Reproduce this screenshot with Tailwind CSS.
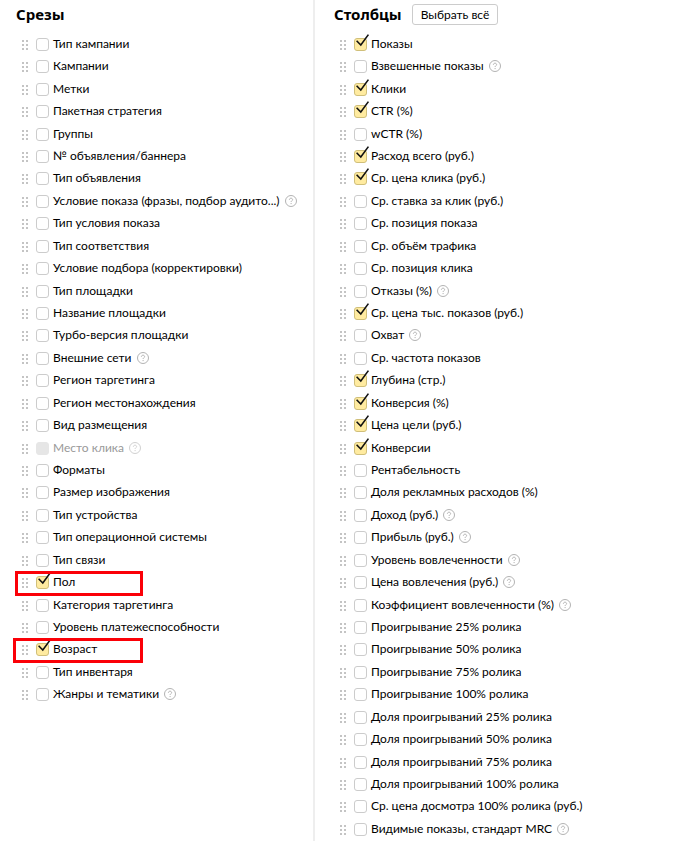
<!DOCTYPE html>
<html lang="ru">
<head>
    <meta charset="UTF-8">
    <meta name="viewport" content="width=device-width, initial-scale=1.0">
    <title>Срезы и столбцы</title>
    <script src="https://cdn.jsdelivr.net/npm/@tailwindcss/browser@4"></script>
</head>
<body class="bg-white text-black font-['Lato','Noto_Sans',sans-serif]">
    <main class="flex min-h-screen">
        <section class="w-[45%] shrink-0 border-r-2 border-[#eeeeee] pl-4">
            <div class="flex h-[33px] items-start pt-1">
                <h2 class="font-['Noto_Sans',sans-serif] text-[15px] leading-5 font-bold">Срезы</h2>
            </div>
            <ul id="slices" class="[&>li:nth-child(7n+2)]:mb-px [&>li:nth-child(7n+4)]:mb-px [&>li:nth-child(7n+7)]:mb-px"></ul>
        </section>
        <section class="grow pl-[19px]">
            <div class="flex h-[33px] items-start gap-[10px] pt-1">
                <h2 class="font-['Noto_Sans',sans-serif] text-[15px] leading-5 font-bold">Столбцы</h2>
                <button type="button" class="h-[21px] rounded-[3px] border border-[#cccccc] px-2 text-[12px] leading-[18px]">Выбрать всё</button>
            </div>
            <ul id="columns" class="[&>li:nth-child(7n+2)]:mb-px [&>li:nth-child(7n+4)]:mb-px [&>li:nth-child(7n+7)]:mb-px"></ul>
        </section>
    </main>

    <script>
        // Flags: c = checked, h = has a hint, d = disabled, m = red frame, w = wider red frame
        const slices = [
            ['Тип кампании'],
            ['Кампании'],
            ['Метки'],
            ['Пакетная стратегия'],
            ['Группы'],
            ['№ объявления/баннера'],
            ['Тип объявления'],
            ['Условие показа (фразы, подбор аудито...)', 'h'],
            ['Тип условия показа'],
            ['Тип соответствия'],
            ['Условие подбора (корректировки)'],
            ['Тип площадки'],
            ['Название площадки'],
            ['Турбо-версия площадки'],
            ['Внешние сети', 'h'],
            ['Регион таргетинга'],
            ['Регион местонахождения'],
            ['Вид размещения'],
            ['Место клика', 'hd'],
            ['Форматы'],
            ['Размер изображения'],
            ['Тип устройства'],
            ['Тип операционной системы'],
            ['Тип связи'],
            ['Пол', 'cm'],
            ['Категория таргетинга'],
            ['Уровень платежеспособности'],
            ['Возраст', 'cw'],
            ['Тип инвентаря'],
            ['Жанры и тематики', 'h'],
        ];

        const columns = [
            ['Показы', 'c'],
            ['Взвешенные показы', 'h'],
            ['Клики', 'c'],
            ['CTR (%)', 'c'],
            ['wCTR (%)'],
            ['Расход всего (руб.)', 'c'],
            ['Ср. цена клика (руб.)', 'c'],
            ['Ср. ставка за клик (руб.)'],
            ['Ср. позиция показа'],
            ['Ср. объём трафика'],
            ['Ср. позиция клика'],
            ['Отказы (%)', 'h'],
            ['Ср. цена тыс. показов (руб.)', 'c'],
            ['Охват', 'h'],
            ['Ср. частота показов'],
            ['Глубина (стр.)', 'c'],
            ['Конверсия (%)', 'c'],
            ['Цена цели (руб.)', 'c'],
            ['Конверсии', 'c'],
            ['Рентабельность'],
            ['Доля рекламных расходов (%)'],
            ['Доход (руб.)', 'h'],
            ['Прибыль (руб.)', 'h'],
            ['Уровень вовлеченности', 'h'],
            ['Цена вовлечения (руб.)', 'h'],
            ['Коэффициент вовлеченности (%)', 'h'],
            ['Проигрывание 25% ролика'],
            ['Проигрывание 50% ролика'],
            ['Проигрывание 75% ролика'],
            ['Проигрывание 100% ролика'],
            ['Доля проигрываний 25% ролика'],
            ['Доля проигрываний 50% ролика'],
            ['Доля проигрываний 75% ролика'],
            ['Доля проигрываний 100% ролика'],
            ['Ср. цена досмотра 100% ролика (руб.)'],
            ['Видимые показы, стандарт MRC', 'h'],
        ];

        const handle = `
            <svg class="mt-[2px] h-[10px] w-[6px] shrink-0 cursor-move" viewBox="0 0 6 10" fill="#c4c4c4" shape-rendering="crispEdges">
                <path d="M0 0h2v2H0zM4 0h2v2H4zM0 4h2v2H0zM4 4h2v2H4zM0 8h2v2H0zM4 8h2v2H4z"/>
            </svg>`;

        const hint = `
            <svg class="ml-[5px] size-3 shrink-0" viewBox="0 0 12 12" fill="none" stroke="#b3b3b3">
                <circle cx="6" cy="6" r="5.5"/>
                <path d="M4.4 4.8c0-1 .7-1.6 1.6-1.6s1.6.6 1.6 1.4c0 1.1-1.5 1.2-1.5 2.4M6.1 8v1.1"/>
            </svg>`;

        // The tick sticks out over the top right corner of its box
        const tick = `
            <svg class="pointer-events-none absolute -top-1 left-0 hidden h-4 w-4 peer-checked:block" viewBox="0 0 16 16" fill="none" stroke="#111" stroke-width="1.6">
                <path d="M2.6 6.8l4.2 4.2L14.4.6"/>
            </svg>`;

        const frame = `<span class="pointer-events-none absolute top-0 right-[170px] -bottom-[3px] -left-px border-3 border-[#fb0007]"></span>`;
        const wideFrame = `<span class="pointer-events-none absolute top-0 right-[170px] -bottom-[3px] -left-[3px] border-3 border-[#fb0007]"></span>`;

        function row([title, flags = '']) {
            const disabled = flags.includes('d');
            return `
                <li class="relative flex h-[22px] items-center pl-[6px]">
                    ${handle}
                    <label class="ml-2 flex items-center ${disabled ? 'text-[#999999]' : ''}">
                        <span class="relative size-[13px] shrink-0">
                            <input type="checkbox" class="peer block size-[13px] appearance-none rounded-[3px] border border-[#cccccc] bg-white checked:border-[#d0bf7a] checked:bg-[#ffeba0] disabled:border-[#e6e6e6] disabled:bg-[#e6e6e6]"
                                ${flags.includes('c') ? 'checked' : ''} ${disabled ? 'disabled' : ''}>
                            ${tick}
                        </span>
                        <span class="ml-1 text-[12px] leading-[18px] whitespace-nowrap">${title}</span>
                    </label>
                    ${flags.includes('h') ? (disabled ? `<span class="opacity-60">${hint}</span>` : hint) : ''}
                    ${flags.includes('m') ? frame : ''}
                    ${flags.includes('w') ? wideFrame : ''}
                </li>`;
        }

        document.getElementById('slices').innerHTML = slices.map(row).join('');
        document.getElementById('columns').innerHTML = columns.map(row).join('');
    </script>
</body>
</html>
